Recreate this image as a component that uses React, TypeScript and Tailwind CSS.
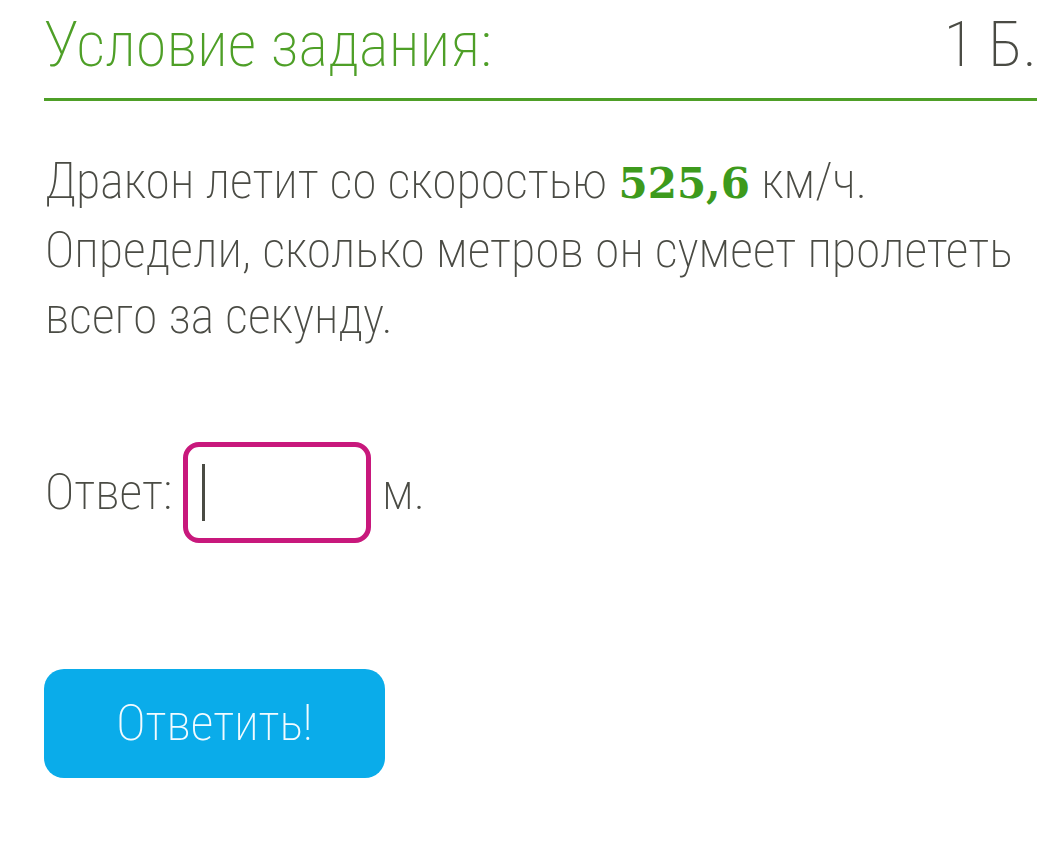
import React from "react";

export default function App() {
  return (
    <div
      className="w-[1053px] h-[841px] bg-white pl-[44px] pr-[16px] pt-[9px] font-extralight text-[#4a4b44]"
      style={{ fontFamily: "Roboto, 'Noto Sans', sans-serif", fontStretch: "condensed" }}
    >
      <div className="flex items-end justify-between border-b-[3px] border-[#4e9f27] pb-[17px]">
        <h1 className="text-[63px] leading-[72px] text-[#4e9f27] font-extralight">Условие задания:</h1>
        <span className="text-[63px] leading-[72px] text-[#4a4b44]">1 Б.</span>
      </div>
      <p className="mt-[47px] text-[50px] leading-[66px] pl-[1px]">
        Дракон летит со скоростью{" "}
        <span
          className="font-bold text-[#3d9a1c] text-[42px]"
          style={{ fontFamily: "'DejaVu Serif', 'Liberation Serif', serif", fontStretch: "normal" }}
        >
          525,6
        </span>{" "}
        км/ч.
        <br />
        Определи, сколько метров он сумеет пролететь
        <br />
        всего за секунду.
      </p>
      <div className="mt-[93px] flex items-center gap-[11px] text-[50px] pl-[1px]">
        <span>Ответ:</span>
        <div className="w-[188px] h-[101px] rounded-[16px] border-[5px] border-[#c8187c] flex items-center pl-[14px]">
          <div className="w-[3px] h-[57px] bg-[#4a4b44]" />
        </div>
        <span>м.</span>
      </div>
      <button className="mt-[126px] w-[341px] h-[109px] rounded-[20px] bg-[#0aacea] text-[#f2fbff] text-[50px] font-extralight">
        Ответить!
      </button>
    </div>
  );
}
